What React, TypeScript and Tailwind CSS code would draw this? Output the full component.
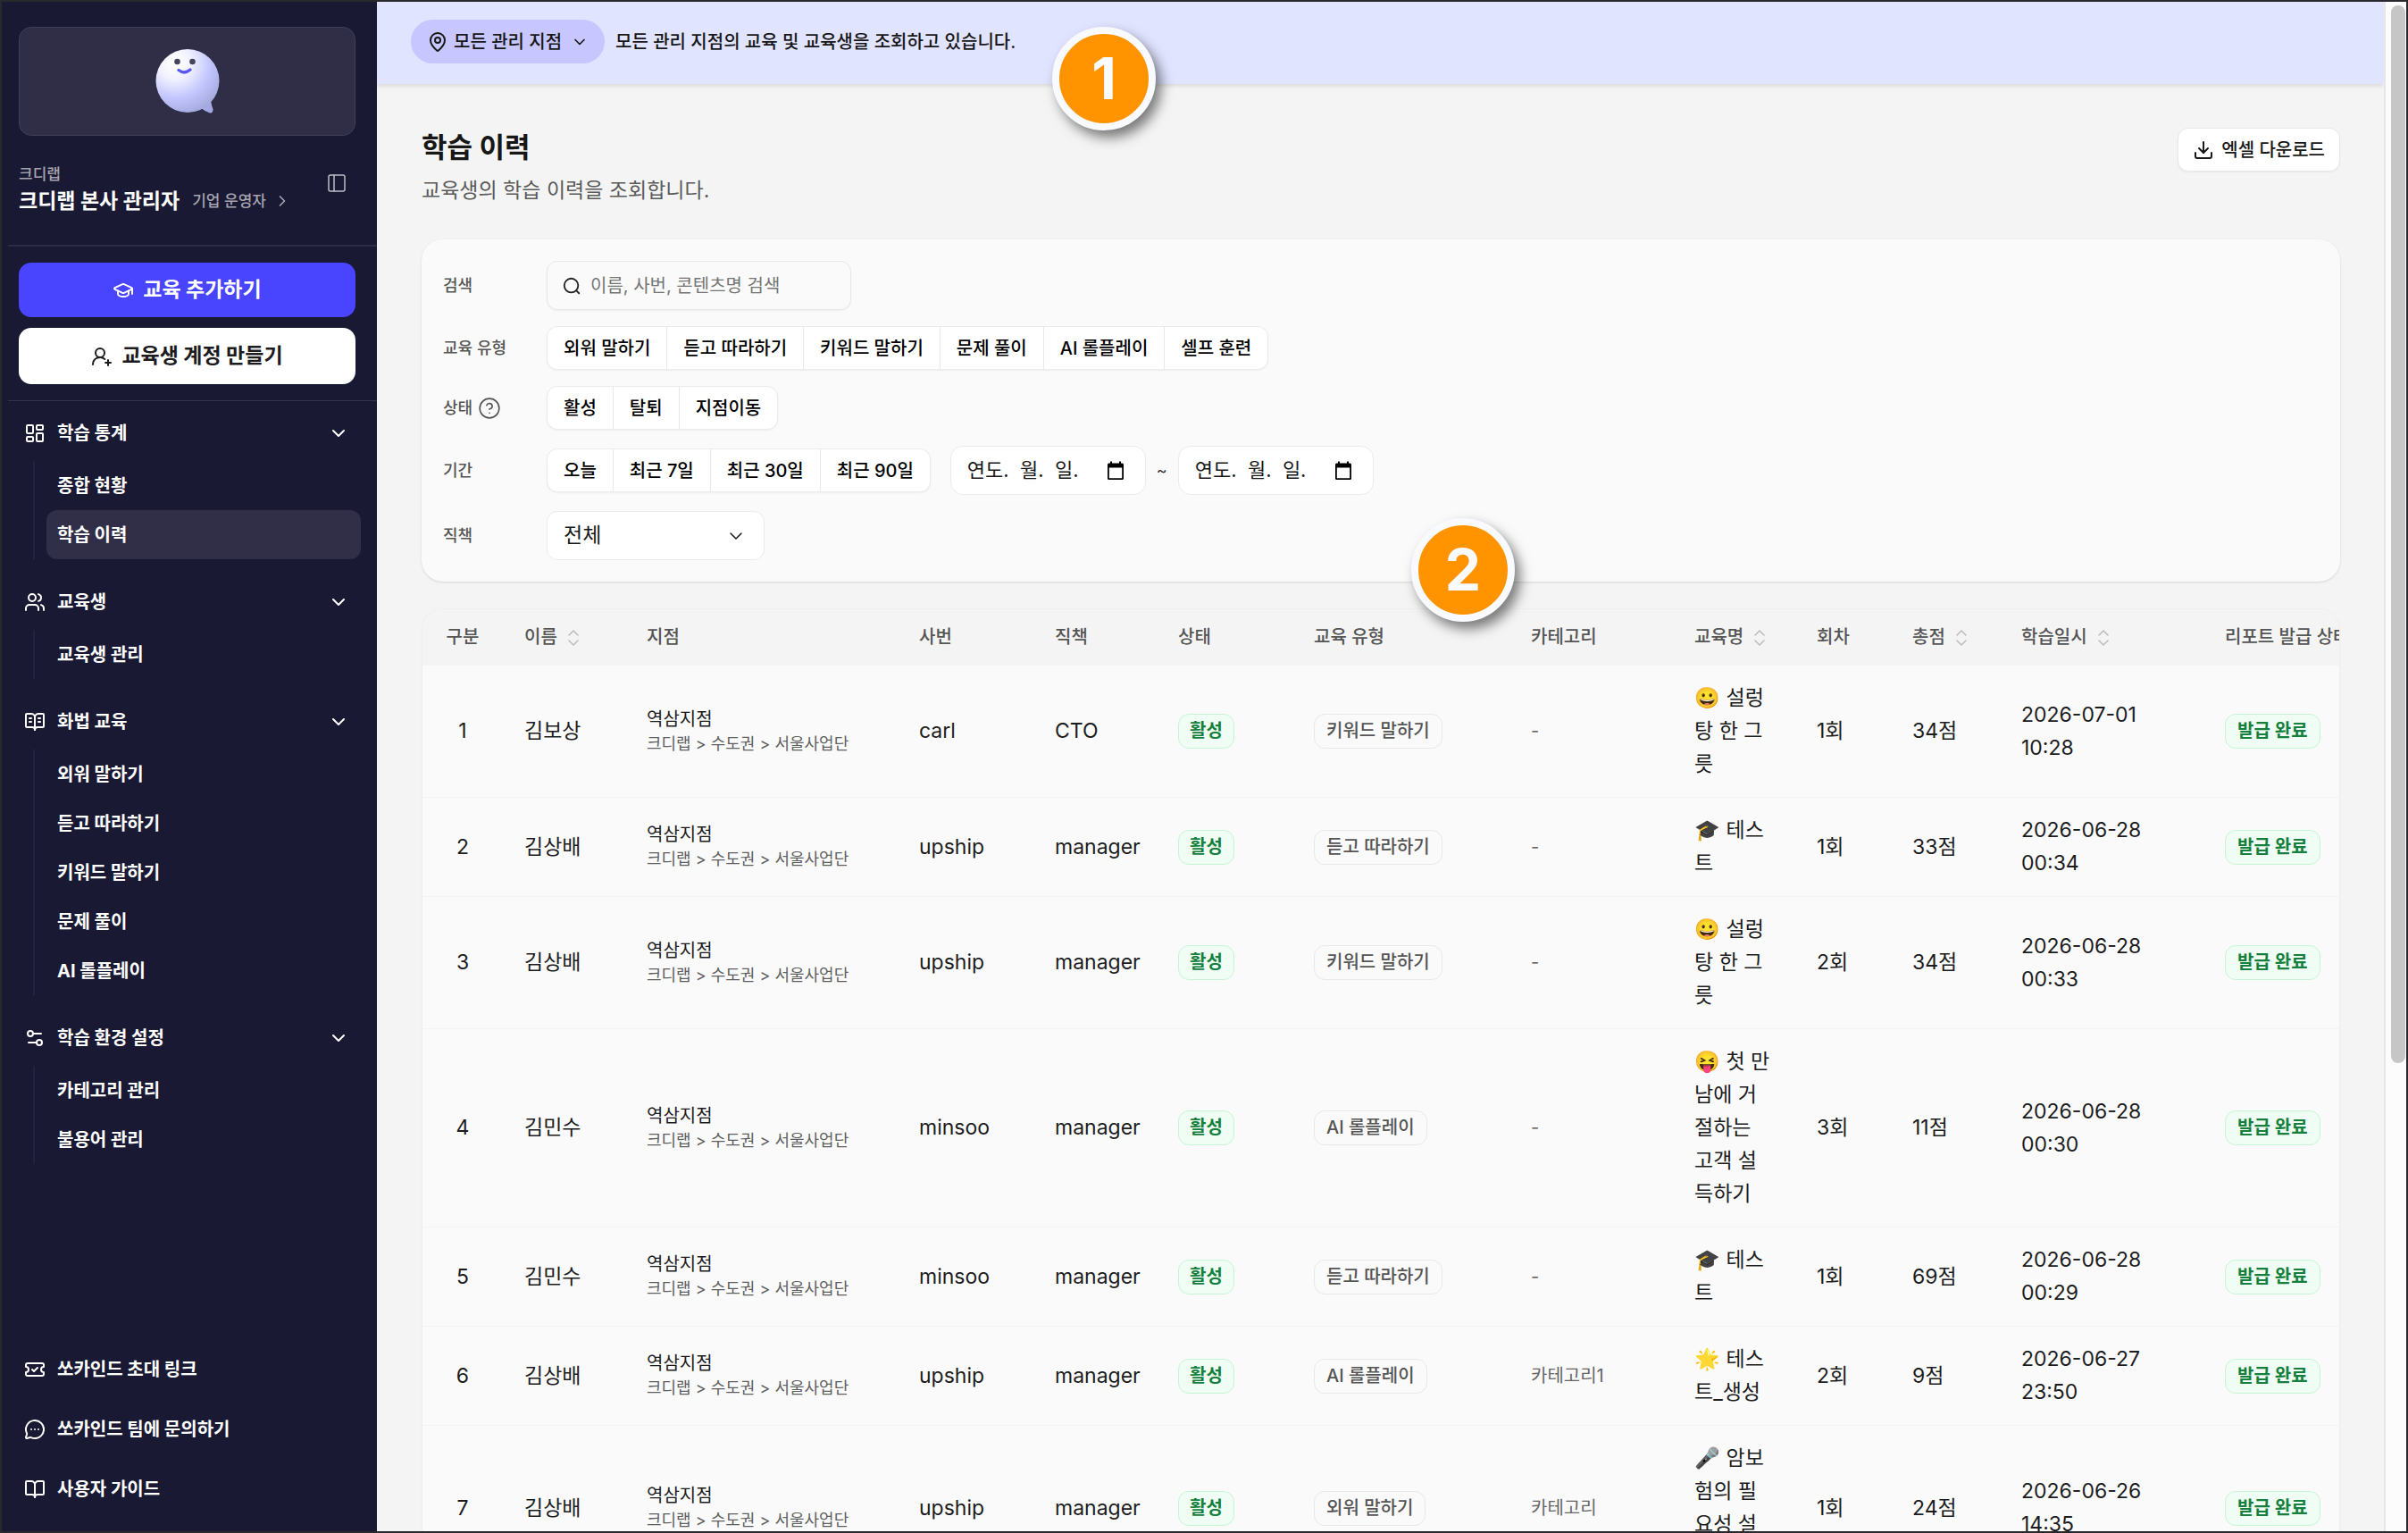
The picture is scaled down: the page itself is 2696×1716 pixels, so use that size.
import type { ReactNode } from "react";
import {
  BookOpen,
  BookOpenText,
  ChevronDown,
  ChevronRight,
  ChevronsUpDown,
  CircleHelp,
  Download,
  GraduationCap,
  LayoutDashboard,
  MapPin,
  MessageCircleMore,
  PanelLeft,
  Settings2,
  TicketCheck,
  UserRoundPlus,
  Users,
  type LucideIcon,
} from "lucide-react";

type MenuGroup = {
  title: string;
  icon: LucideIcon;
  items: string[];
};

type HistoryRow = {
  name: string;
  code: string;
  position: string;
  type: string;
  category: string;
  course: string;
  round: string;
  score: string;
  date: string;
};

type Column = {
  label: string;
  width: string;
  sortable?: boolean;
};

const ACTIVE_ITEM = "학습 이력";

const menu: MenuGroup[] = [
  { title: "학습 통계", icon: LayoutDashboard, items: ["종합 현황", "학습 이력"] },
  { title: "교육생", icon: Users, items: ["교육생 관리"] },
  { title: "화법 교육", icon: BookOpenText, items: ["외워 말하기", "듣고 따라하기", "키워드 말하기", "문제 풀이", "AI 롤플레이"] },
  { title: "학습 환경 설정", icon: Settings2, items: ["카테고리 관리", "불용어 관리"] },
];

const footerLinks: { label: string; icon: LucideIcon }[] = [
  { label: "쏘카인드 초대 링크", icon: TicketCheck },
  { label: "쏘카인드 팀에 문의하기", icon: MessageCircleMore },
  { label: "사용자 가이드", icon: BookOpen },
];

const columns: Column[] = [
  { label: "구분", width: "w-[90px]" },
  { label: "이름", width: "w-[137px]", sortable: true },
  { label: "지점", width: "w-[305px]" },
  { label: "사번", width: "w-[152px]" },
  { label: "직책", width: "w-[138px]" },
  { label: "상태", width: "w-[152px]" },
  { label: "교육 유형", width: "w-[243px]" },
  { label: "카테고리", width: "w-[183px]" },
  { label: "교육명", width: "w-[137px]", sortable: true },
  { label: "회차", width: "w-[107px]" },
  { label: "총점", width: "w-[122px]", sortable: true },
  { label: "학습일시", width: "w-[228px]", sortable: true },
  { label: "리포트 발급 상태", width: "w-[240px]" },
];

const rows: HistoryRow[] = [
  { name: "김보상", code: "carl", position: "CTO", type: "키워드 말하기", category: "-", course: "😀 설렁탕 한 그릇", round: "1회", score: "34점", date: "2026-07-01 10:28" },
  { name: "김상배", code: "upship", position: "manager", type: "듣고 따라하기", category: "-", course: "🎓 테스트", round: "1회", score: "33점", date: "2026-06-28 00:34" },
  { name: "김상배", code: "upship", position: "manager", type: "키워드 말하기", category: "-", course: "😀 설렁탕 한 그릇", round: "2회", score: "34점", date: "2026-06-28 00:33" },
  { name: "김민수", code: "minsoo", position: "manager", type: "AI 롤플레이", category: "-", course: "😝 첫 만남에 거절하는 고객 설득하기", round: "3회", score: "11점", date: "2026-06-28 00:30" },
  { name: "김민수", code: "minsoo", position: "manager", type: "듣고 따라하기", category: "-", course: "🎓 테스트", round: "1회", score: "69점", date: "2026-06-28 00:29" },
  { name: "김상배", code: "upship", position: "manager", type: "AI 롤플레이", category: "카테고리1", course: "🌟 테스트_생성", round: "2회", score: "9점", date: "2026-06-27 23:50" },
  { name: "김상배", code: "upship", position: "manager", type: "외워 말하기", category: "카테고리", course: "🎤 암보험의 필요성 설명", round: "1회", score: "24점", date: "2026-06-26 14:35" },
];

function Mascot() {
  return (
    <svg viewBox="0 0 72 74" className="h-[74px] w-[72px]" aria-hidden="true">
      <defs>
        <radialGradient id="ball" cx="0.3" cy="0.22" r="0.85">
          <stop offset="0" stopColor="#ffffff" />
          <stop offset="0.3" stopColor="#f1f2ff" />
          <stop offset="0.65" stopColor="#c3c6fd" />
          <stop offset="1" stopColor="#a3a8dc" />
        </radialGradient>
      </defs>
      <path d="M51 67 L62 58 Q63 65 64.500 68 Q64.500 73 61 72.500 Q56 71 51 67Z" fill="#a4a9e2" />
      <circle cx="36" cy="36.500" r="35.500" fill="url(#ball)" />
      <circle cx="24.500" cy="15" r="3.300" fill="#45455c" />
      <circle cx="41.500" cy="15" r="3.300" fill="#45455c" />
      <path d="M26 24.500 Q32.500 29.500 39 24" fill="none" stroke="#5a58f5" strokeWidth="3.400" strokeLinecap="round" />
    </svg>
  );
}

function SearchIcon() {
  return (
    <svg viewBox="0 0 24 24" className="size-[22px] flex-none" fill="none" stroke="currentColor" strokeWidth="2" strokeLinecap="round" aria-hidden="true">
      <circle cx="11.500" cy="11.500" r="8.500" />
      <path d="M17.800 17.800 L21 21" />
    </svg>
  );
}

function CalendarIcon() {
  return (
    <svg viewBox="0 0 20 22" className="h-[22px] w-5 flex-none" aria-hidden="true">
      <path d="M2.500 2.500h15a1.500 1.500 0 0 1 1.500 1.500v15.500a1.500 1.500 0 0 1-1.500 1.500h-15a1.500 1.500 0 0 1-1.500-1.500V4a1.500 1.500 0 0 1 1.500-1.500ZM2.800 7.500v11.700h14.400V7.500Z" fill="#000" fillRule="evenodd" />
      <path d="M4 0.500h2v3H4ZM14 0.500h2v3h-2Z" fill="#000" />
    </svg>
  );
}

function Sidebar() {
  return (
    <aside className="flex w-[420px] flex-none flex-col bg-[#1a1933] text-white">
      <div className="pt-7 pr-6 pl-[19px]">
        <div className="flex h-[122px] items-center justify-center rounded-[14px] border border-[#403f56] bg-[#2f2e46]">
          <Mascot />
        </div>
        <div className="mt-[29px] flex items-start justify-between pr-[9px]">
          <div>
            <p className="text-[17px] leading-7 font-medium text-[#a5a4b0]">크디랩</p>
            <button type="button" className="flex items-center leading-8">
              <span className="text-[23px] font-bold">크디랩 본사 관리자</span>
              <span className="ml-[14px] text-[17px] font-medium text-[#a5a4b0]">기업 운영자</span>
              <ChevronRight className="ml-2 size-5 text-[#a5a4b0]" strokeWidth={2} aria-hidden="true" />
            </button>
          </div>
          <button type="button" aria-label="사이드바 접기" className="mt-3 text-[#bdbcc6]">
            <PanelLeft className="size-6" strokeWidth={1.5} aria-hidden="true" />
          </button>
        </div>
      </div>

      <div className="mt-[33px] ml-[7px] h-[2px] flex-none bg-[#2d2c46]" />

      <div className="flex flex-col gap-3 py-[18px] pr-6 pl-[19px]">
        <button type="button" className="flex h-[61px] items-center justify-center gap-[10px] rounded-[14px] bg-[#4945ff] text-[23px] font-bold">
          <GraduationCap className="size-6" strokeWidth={2} aria-hidden="true" />
          교육 추가하기
        </button>
        <button type="button" className="flex h-[63px] items-center justify-center gap-[10px] rounded-[14px] bg-white text-[23px] font-bold text-[#1c1c1e]">
          <UserRoundPlus className="size-6" strokeWidth={2} aria-hidden="true" />
          교육생 계정 만들기
        </button>
      </div>

      <div className="ml-[7px] h-px flex-none bg-[#35344d]" />

      <nav className="flex flex-col gap-[17px] pt-[5px]">
        {menu.map(({ title, icon: Icon, items }) => (
          <section key={title}>
            <button type="button" className="flex h-[62px] w-full items-center pr-[31px] pl-[25px] text-[20px] font-bold">
              <Icon className="size-6" strokeWidth={2} aria-hidden="true" />
              <span className="ml-[13px]">{title}</span>
              <ChevronDown className="ml-auto size-6" strokeWidth={2} aria-hidden="true" />
            </button>
            <ul className="mr-[18px] ml-[35px] border-l-2 border-[#232240] pl-[13px]">
              {items.map((item) => (
                <li key={item}>
                  <a
                    href="#"
                    className={
                      item === ACTIVE_ITEM
                        ? "flex h-[55px] items-center rounded-xl bg-[#302f47] px-3 text-[20px] font-bold"
                        : "flex h-[55px] items-center rounded-xl px-3 text-[20px] font-bold"
                    }
                  >
                    {item}
                  </a>
                </li>
              ))}
            </ul>
          </section>
        ))}
      </nav>

      <div className="mt-auto pb-[14px]">
        {footerLinks.map(({ label, icon: Icon }) => (
          <a key={label} href="#" className="flex h-[67px] items-center gap-[13px] pl-[25px] text-[20px] font-bold">
            <Icon className="size-6" strokeWidth={2} aria-hidden="true" />
            {label}
          </a>
        ))}
      </div>
    </aside>
  );
}

function FilterRow({ label, htmlFor, help, children }: { label: string; htmlFor?: string; help?: boolean; children: ReactNode }) {
  return (
    <div className="flex items-center">
      <div className="flex w-[116px] flex-none items-center gap-[6px] text-[18px] font-medium text-[#555]">
        {htmlFor ? <label htmlFor={htmlFor}>{label}</label> : <span>{label}</span>}
        {help ? <CircleHelp className="size-[26px]" strokeWidth={1.5} aria-hidden="true" /> : null}
      </div>
      {children}
    </div>
  );
}

function ButtonGroup({ options }: { options: string[] }) {
  return (
    <div className="flex h-[49px] divide-x divide-[#e8e8e8] overflow-hidden rounded-xl border border-[#ebebeb] bg-white shadow-xs">
      {options.map((option) => (
        <button key={option} type="button" className="px-[18px] text-[20px] font-medium text-black">
          {option}
        </button>
      ))}
    </div>
  );
}

function DateField({ label }: { label: string }) {
  return (
    <div className="flex h-[55px] w-[219px] items-center rounded-[14px] border border-[#ebebeb] bg-white pr-[23px] pl-[18px]">
      <input aria-label={label} defaultValue={"연도.\u00a0\u00a0월.\u00a0\u00a0일."} className="w-full min-w-0 bg-transparent text-[22px] text-[#171717] outline-none" />
      <CalendarIcon />
    </div>
  );
}

function Filters() {
  return (
    <section className="mt-[37px] flex flex-col gap-[18px] rounded-3xl bg-[#fafafa] px-6 py-6 shadow-sm">
      <FilterRow label="검색" htmlFor="search">
        <div className="flex h-[55px] w-[341px] items-center gap-[10px] rounded-xl border border-[#e8e8e8] bg-[#fafafa] px-4 text-[#222] shadow-xs">
          <SearchIcon />
          <input id="search" placeholder="이름, 사번, 콘텐츠명 검색" className="w-full min-w-0 bg-transparent text-[20px] outline-none placeholder:text-[#757575]" />
        </div>
      </FilterRow>
      <FilterRow label="교육 유형">
        <ButtonGroup options={["외워 말하기", "듣고 따라하기", "키워드 말하기", "문제 풀이", "AI 롤플레이", "셀프 훈련"]} />
      </FilterRow>
      <FilterRow label="상태" help>
        <ButtonGroup options={["활성", "탈퇴", "지점이동"]} />
      </FilterRow>
      <FilterRow label="기간">
        <ButtonGroup options={["오늘", "최근 7일", "최근 30일", "최근 90일"]} />
        <div className="ml-[22px] flex items-center gap-3">
          <DateField label="시작일" />
          <span className="text-[18px] text-[#333]">~</span>
          <DateField label="종료일" />
        </div>
      </FilterRow>
      <FilterRow label="직책" htmlFor="position">
        <div className="relative">
          <select id="position" className="h-[55px] w-[244px] appearance-none rounded-xl border border-[#ebebeb] bg-white px-[18px] text-[23px] text-[#171717]">
            <option>전체</option>
          </select>
          <ChevronDown className="pointer-events-none absolute top-4 right-5 size-6" strokeWidth={1.5} aria-hidden="true" />
        </div>
      </FilterRow>
    </section>
  );
}

function HistoryTable() {
  return (
    <section className="mt-[30px] overflow-hidden rounded-3xl border border-[#efefef] bg-[#fafafa] shadow-xs">
      <table className="w-[2234px] table-fixed text-left text-[23px] leading-[37px] text-[#1c1c1e]">
        <thead>
          <tr className="h-[63px] bg-[#f4f4f4] text-[20px] text-[#555]">
            {columns.map((column, index) => (
              <th key={column.label} scope="col" className={`${column.width} ${index === 0 ? "text-center" : "pl-6"} font-medium whitespace-nowrap`}>
                {column.sortable ? (
                  <button type="button" className="flex items-center gap-[6px]">
                    {column.label}
                    <ChevronsUpDown className="size-6 text-[#bbb]" strokeWidth={1.5} aria-hidden="true" />
                  </button>
                ) : (
                  column.label
                )}
              </th>
            ))}
          </tr>
        </thead>
        <tbody>
          {rows.map((row, index) => (
            <tr key={row.date} className="border-b border-[#f3f3f3]">
              <td className="text-center">{index + 1}</td>
              <td className="pl-6">{row.name}</td>
              <td className="pl-6">
                <p className="text-[20px] leading-[27px]">역삼지점</p>
                <p className="text-[18px] leading-[27px] text-[#5f5f5f]">크디랩 &gt; 수도권 &gt; 서울사업단</p>
              </td>
              <td className="pl-6">{row.code}</td>
              <td className="pl-6">{row.position}</td>
              <td className="pl-6">
                <span className="flex h-[39px] w-fit items-center rounded-xl border border-[#c5f5d5] bg-[#f0fdf4] px-3 text-[20px] font-semibold text-[#15803d]">활성</span>
              </td>
              <td className="pl-6">
                <span className="flex h-[39px] w-fit items-center rounded-xl border border-[#e8e8e8] px-[13px] text-[20px] font-medium text-[#555]">{row.type}</span>
              </td>
              <td className="pl-6 text-[20px] text-[#666]">{row.category}</td>
              <td className="px-6 py-[18px]">{row.course}</td>
              <td className="pl-6">{row.round}</td>
              <td className="pl-6">{row.score}</td>
              <td className="px-6">{row.date}</td>
              <td className="pl-6">
                <span className="flex h-[39px] w-fit items-center rounded-xl border border-[#c5f5d5] bg-[#f0fdf4] px-[13px] text-[20px] font-semibold text-[#15803d]">발급 완료</span>
              </td>
            </tr>
          ))}
        </tbody>
      </table>
    </section>
  );
}

export default function App() {
  return (
    <div className="relative flex h-screen overflow-hidden border-2 border-[#27292d] bg-[#f4f4f4] font-['Inter','Noto_Sans_CJK_KR',sans-serif] text-[#171717]">
      <Sidebar />

      <main className="min-w-0 flex-1 overflow-hidden">
        <header className="flex h-[92px] items-start bg-[#e1e4ff] px-[38px] pt-5 shadow-[0_2px_5px_rgba(0,0,0,0.12)]">
          <div className="flex h-[49px] items-center">
            <button type="button" className="flex h-[49px] items-center rounded-full bg-[#c7c6ff] px-[18px] text-[20px] font-medium">
              <MapPin className="size-6" strokeWidth={2} aria-hidden="true" />
              <span className="ml-[6px]">모든 관리 지점</span>
              <ChevronDown className="ml-[10px] size-5" strokeWidth={2} aria-hidden="true" />
            </button>
            <p className="ml-3 text-[20px] font-medium">모든 관리 지점의 교육 및 교육생을 조회하고 있습니다.</p>
          </div>
        </header>

        <div className="pt-[47px] pr-[49px] pl-[50px]">
          <div className="flex items-start justify-between">
            <div>
              <h1 className="text-[31px] leading-[48px] font-bold">학습 이력</h1>
              <p className="mt-[6px] text-[23px] leading-9 text-[#5a5a5a]">교육생의 학습 이력을 조회합니다.</p>
            </div>
            <button type="button" className="mt-[2px] flex h-[49px] items-center gap-2 rounded-xl border border-[#e8e8e8] bg-white px-4 text-[20px] font-medium shadow-xs">
              <Download className="size-6" strokeWidth={2} aria-hidden="true" />
              엑셀 다운로드
            </button>
          </div>

          <Filters />
          <HistoryTable />
        </div>
      </main>

      <div className="w-[25px] flex-none border-l-2 border-[#e6e6e6] bg-[#fcfcfc] pt-1 pl-[6px]">
        <div className="h-[69.3%] w-4 rounded-full bg-[#c6c6c6]" />
      </div>

      {/* step markers */}
      <span className="absolute top-[28px] left-[1176px] flex size-[116px] items-center justify-center rounded-full border-8 border-[#f9fafd] bg-[#ff9300] text-[64px] font-bold text-[#f9fafd] shadow-[6px_8px_14px_rgba(0,0,0,0.5)]">1</span>
      <span className="absolute top-[578px] left-[1578px] flex size-[116px] items-center justify-center rounded-full border-8 border-[#f9fafd] bg-[#ff9300] text-[64px] font-bold text-[#f9fafd] shadow-[6px_8px_14px_rgba(0,0,0,0.5)]">2</span>
    </div>
  );
}
